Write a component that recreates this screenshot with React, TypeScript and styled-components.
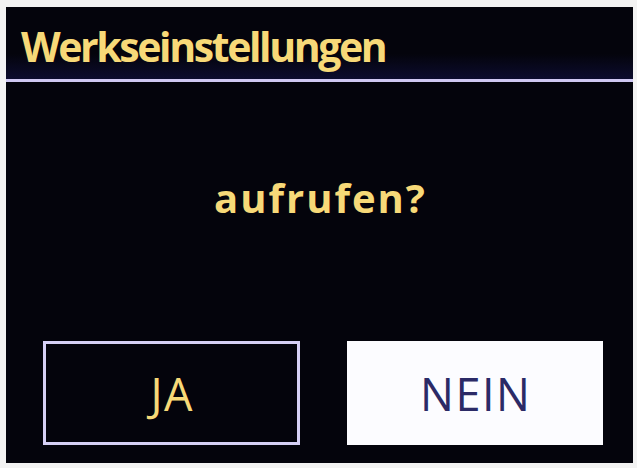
import { createGlobalStyle, styled } from "styled-components"

const Global = createGlobalStyle`
  html, body {
    margin: 0;
    padding: 0;
    background: #f3f3f3;
  }
`

const Screen = styled.div`
  margin: 7px 4px 0 6px;
  width: 627px;
  height: 456px;
  background: #04040c;
  display: flex;
  flex-direction: column;
  font-family: "Open Sans", "Noto Sans", sans-serif;
`

const Header = styled.div`
  height: 75px;
  box-sizing: border-box;
  display: flex;
  align-items: center;
  padding: 6px 0 0 15px;
  border-bottom: 3px solid #cfc8f2;
  background: linear-gradient(#04040c 65%, #0c0c2e);
`

const Title = styled.h1`
  margin: 0;
  font-size: 41px;
  font-weight: 700;
  color: #f7d978;
  letter-spacing: -2.4px;
`

const Body = styled.div`
  flex: 1;
  display: flex;
  flex-direction: column;
  padding-bottom: 18px;
`

const Question = styled.p`
  margin: 0;
  flex: 1;
  display: flex;
  align-items: center;
  justify-content: center;
  padding: 0 0 28px 2px;
  font-size: 40px;
  font-weight: 700;
  letter-spacing: 2px;
  color: #f7d978;
`

const Buttons = styled.div`
  display: flex;
  gap: 47px;
  padding: 0 30px 0 37px;
`

const Choice = styled.div<{ $active?: boolean }>`
  flex: 1;
  height: 104px;
  box-sizing: border-box;
  display: flex;
  align-items: center;
  justify-content: center;
  padding-left: 2px;
  font-size: 45px;
  font-weight: 400;
  letter-spacing: 1.5px;
  border: 3px solid ${(p) => (p.$active ? "#fcfcff" : "#d6d0f6")};
  background: ${(p) => (p.$active ? "#fcfcff" : "#04040c")};
  color: ${(p) => (p.$active ? "#2b2a66" : "#f7d978")};
`

export default function App() {
  return (
    <>
      <Global />
      <Screen>
        <Header>
          <Title>Werkseinstellungen</Title>
        </Header>
        <Body>
          <Question>aufrufen?</Question>
          <Buttons>
            <Choice>JA</Choice>
            <Choice $active>NEIN</Choice>
          </Buttons>
        </Body>
      </Screen>
    </>
  )
}
